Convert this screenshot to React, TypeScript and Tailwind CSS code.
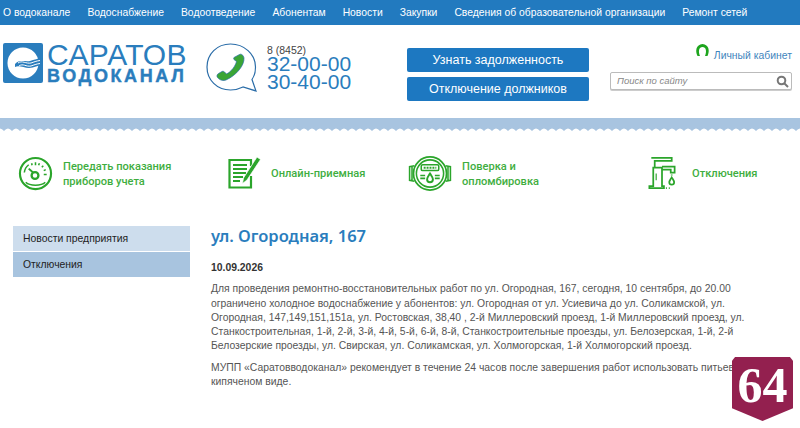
import React from 'react';

const navItems = ['О водоканале', 'Водоснабжение', 'Водоотведение', 'Абонентам', 'Новости', 'Закупки', 'Сведения об образовательной организации', 'Ремонт сетей'];

const Logo = () => (
  <div className="flex items-start gap-[4px] w-[190px]">
    <svg width="40" height="40" viewBox="0 0 40 40" className="shrink-0">
      <rect width="40" height="40" rx="2" fill="#2a7dbd" />
      <circle cx="20" cy="20" r="15.500" fill="#fff" />
      <path d="M12 21 C16 16 22 19 27 18 C31 17 35 15 40 15 V22 C35 22 31 25 26 25 C21 25 16 22 12 24Z" fill="#2a7dbd" />
      <path d="M15 20 C19 17 23 21 28 20 C31 19 33 18 37 17.500" fill="none" stroke="#fff" strokeWidth="1" />
      <path d="M16 23 C20 20 23 24 28 23 C31 22 33 21 37 20.500" fill="none" stroke="#fff" strokeWidth="1" />
    </svg>
    <div className="flex flex-col text-[#2a7dbd]">
      <div className="text-[30px] leading-[24px] h-[25px] tracking-[0.4px] whitespace-nowrap">САРАТОВ</div>
      <div className="text-[18px] leading-[15px] font-bold tracking-[2.600px] whitespace-nowrap mt-[1px] [-webkit-text-stroke:0.4px_#2a7dbd]">ВОДОКАНАЛ</div>
    </div>
  </div>
);

const PhoneBubble = () => (
  <svg width="52" height="50" viewBox="0 0 52 50">
    <path d="M24.500 1 C11 1 1 11 1 24 C1 37 11 47 24.500 47 C29.500 47 33 46 37 44 L50 48 L46 36.500 C48.500 33 49.500 29 49.500 24 C49.500 11 38 1 24.500 1Z" fill="#fff" stroke="#2b6da8" strokeWidth="1.200" />
    <path d="M33.500 11.500 C35 10.500 37.500 12 38 15 C38.500 22 31 32 20 37 C17.500 38 14 37.500 11.500 34.500 C10.500 33 11 31.500 12.500 30.500 L16 28.500 C17 28 18 28.500 18.500 29 L20.500 31 C25 29 29.500 23 30.500 18.500 L28 16.500 C27.500 16 27.500 15 28 14.500Z" fill="#3aa535" stroke="#2b6da8" strokeWidth="0.700" />
  </svg>
);

const GaugeIcon = () => (
  <svg width="35" height="35" viewBox="0 0 36 36" fill="none" stroke="#2ba52b" strokeWidth="2.200">
    <circle cx="18" cy="18" r="16" />
    <path d="M6.500 17 C7 13 9 10.500 11 9" strokeWidth="1.600" />
    <path d="M14 7.500l.5 2M18 6.500v3M22 7.500l-.8 2M26 10l-1.500 1.500M28.500 14l-2 1M29.500 19h-3" strokeWidth="1.600" />
    <circle cx="17.500" cy="20" r="3.500" strokeWidth="2.400" />
    <path d="M15.500 17 L11 13" strokeWidth="2" />
    <path d="M8 27 C12 31 24 31 28 27" strokeWidth="1.600" />
  </svg>
);

const FormIcon = () => (
  <svg width="33" height="34" viewBox="0 0 33 34" fill="none" stroke="#2ba52b">
    <path d="M23 10V4H1.500V31.500H23V20" strokeWidth="2.200" />
    <path d="M5 9h14M5 13h14M5 17h13M5 21h10M5 25h7" strokeWidth="2" />
    <path d="M29 1 L32.500 3.500 L19 24 L14.500 27.500 L15.500 22Z" fill="#2ba52b" stroke="#fff" strokeWidth="0.700" />
  </svg>
);

const MeterIcon = () => (
  <svg width="44" height="35" viewBox="0 0 44 36" fill="none" stroke="#2ba52b" strokeWidth="1.600">
    <path d="M6 10 L1 11 V25 L6 26M38 10 L43 11 V25 L38 26M3.500 11v14M40.500 11v14" />
    <circle cx="22" cy="18" r="17" strokeWidth="1.800" />
    <circle cx="22" cy="18" r="14" />
    <rect x="13" y="9" width="18" height="6" rx="1.500" />
    <path d="M15.500 12h13" strokeWidth="2" strokeDasharray="2 1" />
    <path d="M22 18 C24 21 25 22 25 24 A3 3 0 0 1 19 24 C19 22 20 21 22 18Z" strokeWidth="2" />
    <path d="M12 20h5M12 23h5M27 20h5M27 23h5" />
  </svg>
);

const TapIcon = () => (
  <svg width="30" height="34" viewBox="0 0 30 35" fill="none" stroke="#2ba52b" strokeWidth="1.800">
    <path d="M2 33h15v-2h-2V12H6v19H2z" />
    <path d="M4 2h21v3H7.500v7" />
    <path d="M15 11h13v6h-4v-3H15" />
    <path d="M9 18v7" strokeWidth="1.200" />
    <path d="M25 22 C26.500 24.500 27.500 25.500 27.500 27 A2.500 2.500 0 0 1 22.500 27 C22.500 25.500 23.500 24.500 25 22Z" strokeWidth="1.800" />
    <path d="M25 19v1M19 33h1M22 33h1" />
  </svg>
);

const QuickLink = ({ icon, lines, iconClass, boxClass }: any) => (
  <div className={`flex items-center shrink-0 ${boxClass}`}>
    <div className={`shrink-0 flex items-center ${iconClass}`}>{icon}</div>
    <div className="font-['Roboto',sans-serif] font-medium text-[11.100px] leading-[14.500px] mt-[3px] text-[#3fae3f] whitespace-nowrap">
      {lines.map((l: string) => <div key={l}>{l}</div>)}
    </div>
  </div>
);

export default function App() {
  return (
    <div className="relative w-[800px] h-[428px] overflow-hidden bg-white font-['Liberation_Sans',sans-serif]">
      <nav className="h-[25px] bg-[#227abf] flex items-center pl-[3px] gap-[17px] text-[10.350px] text-white whitespace-nowrap">
        {navItems.map(n => <span key={n}>{n}</span>)}
      </nav>

      <header className="h-[93px] flex">
        <div className="w-[206px] pl-[3px] pt-[18px]"><Logo /></div>
        <div className="w-[61px] pt-[18px]"><PhoneBubble /></div>
        <div className="w-[140px] pt-[19px] text-[#2a7dbd]">
          <div className="text-[10.500px] leading-[12px] text-[#444]">8 (8452)</div>
          <div className="text-[21px] leading-[18px] -mt-[1px]">32-00-00</div>
          <div className="text-[21px] leading-[18px]">30-40-00</div>
        </div>
        <div className="w-[203px] pt-[23px] flex flex-col gap-[5px]">
          <div className="w-[182px] h-[24px] bg-[#1d78c1] rounded-[2px] flex items-center justify-center text-[12.500px] text-white">Узнать задолженность</div>
          <div className="w-[182px] h-[24px] bg-[#1d78c1] rounded-[2px] flex items-center justify-center text-[12.500px] text-white">Отключение должников</div>
        </div>
        <div className="w-[182px] pt-[22px] flex flex-col items-end">
          <div className="flex items-center gap-[4px] h-[17px]">
            <svg width="15" height="14" viewBox="0 0 15 14" className="-mt-[11px]"><path d="M2.500 13 C0 8 1 1.500 7.500 1 C14 1.500 15 8 12.500 13 L10 13 C12 8 11 4 7.500 4 C4 4 3 8 5 13Z" fill="#1ea51e" /></svg>
            <span className="text-[10.400px] text-[#3f85bd]">Личный кабинет</span>
          </div>
          <div className="mt-[8px] w-[182px] h-[18px] bg-white border border-[#bbb] rounded-[2px] flex items-center justify-between pl-[6px] pr-[2px] shadow-[0_1px_0_#ccc]">
            <span className="text-[9.500px] italic text-[#888]">Поиск по сайту</span>
            <svg width="13" height="13" viewBox="0 0 13 13" fill="none" stroke="#777" strokeWidth="2"><circle cx="5.500" cy="5.500" r="3.800" /><path d="M8.500 8.500L12 12" /></svg>
          </div>
        </div>
      </header>

      <svg width="800" height="14" className="block">
        <defs>
          <pattern id="scallop" width="8" height="14" patternUnits="userSpaceOnUse">
            <path d="M0 0H8V10.500 Q6 10.500 4 13 Q2 10.500 0 10.500Z" fill="#a8c4e0" />
          </pattern>
        </defs>
        <rect width="800" height="14" fill="url(#scallop)" />
      </svg>

      <div className="h-[94px] flex items-center pl-[18px] pb-[12px]">
        <QuickLink iconClass="w-[45px]" boxClass="w-[210px]" icon={<GaugeIcon />} lines={['Передать показания', 'приборов учета']} />
        <QuickLink iconClass="w-[43px]" boxClass="w-[180px]" icon={<FormIcon />} lines={['Онлайн-приемная']} />
        <QuickLink iconClass="w-[54px]" boxClass="w-[239px]" icon={<MeterIcon />} lines={['Поверка и', 'опломбировка']} />
        <QuickLink iconClass="w-[45px]" boxClass="w-[120px]" icon={<TapIcon />} lines={['Отключения']} />
      </div>

      <main className="flex pl-[13px]">
        <aside className="w-[177px] shrink-0">
          <div className="h-[25px] bg-[#cddded] flex items-center pl-[10px] text-[10.400px] text-[#222] mb-[1px]">Новости предприятия</div>
          <div className="h-[25px] bg-[#a8c4df] flex items-center pl-[10px] text-[10.400px] text-[#222]">Отключения</div>
        </aside>
        <article className="ml-[21px] w-[585px] text-[10.380px] leading-[14.300px] text-[#555] -mt-[2px]">
          <h1 className="font-['Noto_Sans',sans-serif] font-semibold text-[16.500px] leading-[24px] text-[#2a7dbd]">ул. Огородная, 167</h1>
          <div className="mt-[13px] font-bold text-[#333]">10.09.2026</div>
          <p className="mt-[7px] w-[540px]">Для проведения ремонтно-восстановительных работ по ул. Огородная, 167, сегодня, 10 сентября, до 20.00 ограничено холодное водоснабжение у абонентов: ул. Огородная от ул. Усиевича до ул. Соликамской, ул. Огородная, 147,149,151,151а, ул. Ростовская, 38,40 , 2-й Миллеровский проезд, 1-й Миллеровский проезд, ул. Станкостроительная, 1-й, 2-й, 3-й, 4-й, 5-й, 6-й, 8-й, Станкостроительные проезды, ул. Белозерская, 1-й, 2-й Белозерские проезды, ул. Свирская, ул. Соликамская, ул. Холмогорская, 1-й Холмогорский проезд.</p>
          <p className="mt-[7px] w-[580px]">МУПП «Саратовводоканал» рекомендует в течение 24 часов после завершения работ использовать питьевую воду в кипяченом виде.</p>
        </article>
      </main>

      <div className="absolute left-[732px] top-[357px] w-[61px] h-[64px] bg-[#93204f] [clip-path:polygon(5%_0,95%_0,100%_6%,100%_80%,50%_100%,0_80%,0_6%)] flex items-start justify-center pt-[3px] text-white font-['Liberation_Serif',serif] font-bold text-[50px] leading-[50px]">64</div>
    </div>
  );
}
